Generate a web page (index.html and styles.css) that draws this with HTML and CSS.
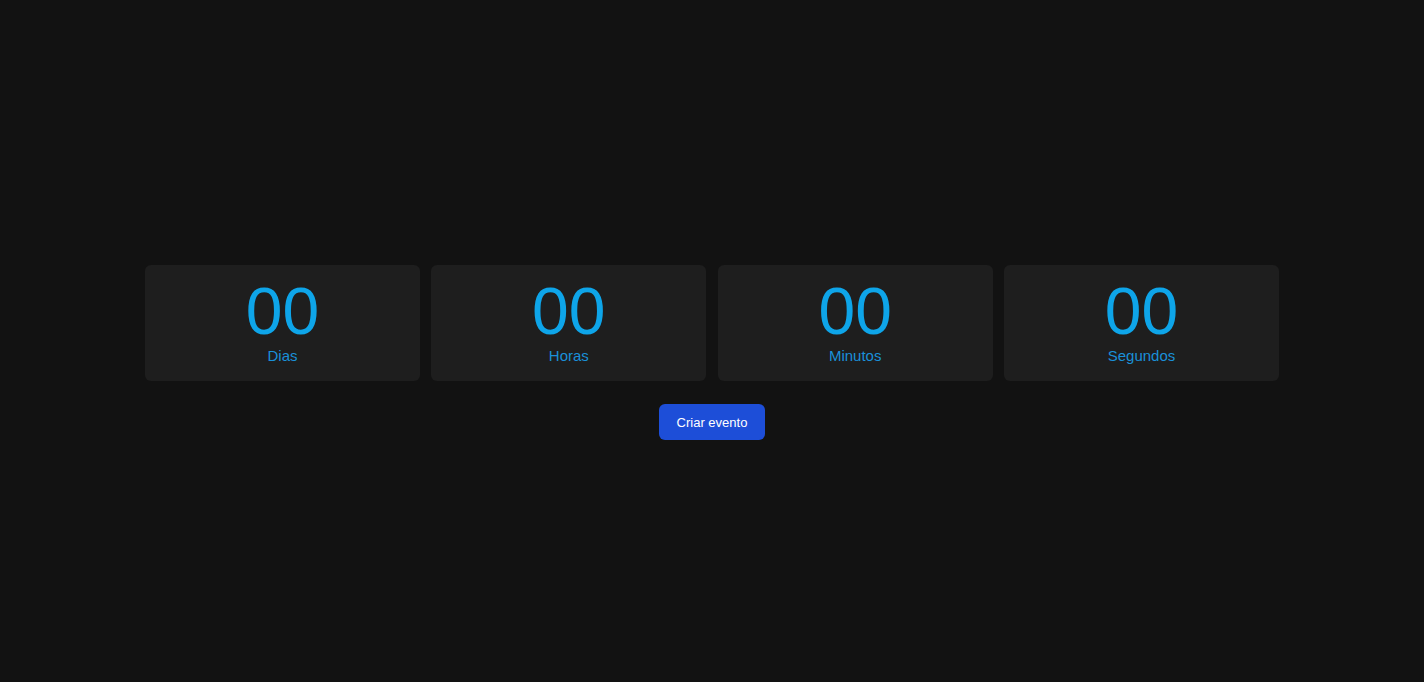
FILE: index.html
```html
<!DOCTYPE html>
<html lang="pt">
<head>
<meta charset="utf-8">
<title>Contagem</title>
<link rel="stylesheet" href="styles.css">
</head>
<body>
<main class="page">
  <section class="countdown">
    <div class="card"><span class="num">00</span><span class="label">Dias</span></div>
    <div class="card"><span class="num">00</span><span class="label">Horas</span></div>
    <div class="card"><span class="num">00</span><span class="label">Minutos</span></div>
    <div class="card"><span class="num">00</span><span class="label">Segundos</span></div>
  </section>
  <button class="btn" type="button">Criar evento</button>
</main>
</body>
</html>
```
FILE: styles.css
```css
html, body {
  margin: 0;
  padding: 0;
  background: #121212;
  font-family: "Liberation Sans", Arial, sans-serif;
}
.page {
  min-height: 682px;
  box-sizing: border-box;
  padding-top: 265px;
  display: flex;
  flex-direction: column;
  align-items: center;
}
.countdown {
  width: 1134px;
  display: grid;
  grid-template-columns: repeat(4, 1fr);
  column-gap: 11.33px;
}
.card {
  background: #1e1e1e;
  border-radius: 6px;
  height: 116px;
  box-sizing: border-box;
  padding-top: 13px;
  display: flex;
  flex-direction: column;
  align-items: center;
}
.num {
  font-size: 66px;
  line-height: 66px;
  color: #0ea5e9;
}
.label {
  margin-top: 3px;
  font-size: 15px;
  line-height: 17px;
  color: #1a90d8;
}
.btn {
  margin-top: 23px;
  width: 106px;
  height: 36px;
  border: none;
  border-radius: 6px;
  background: #1d4ed8;
  color: #ffffff;
  font-family: "Liberation Sans", Arial, sans-serif;
  font-size: 13px;
  padding: 0;
}
```
